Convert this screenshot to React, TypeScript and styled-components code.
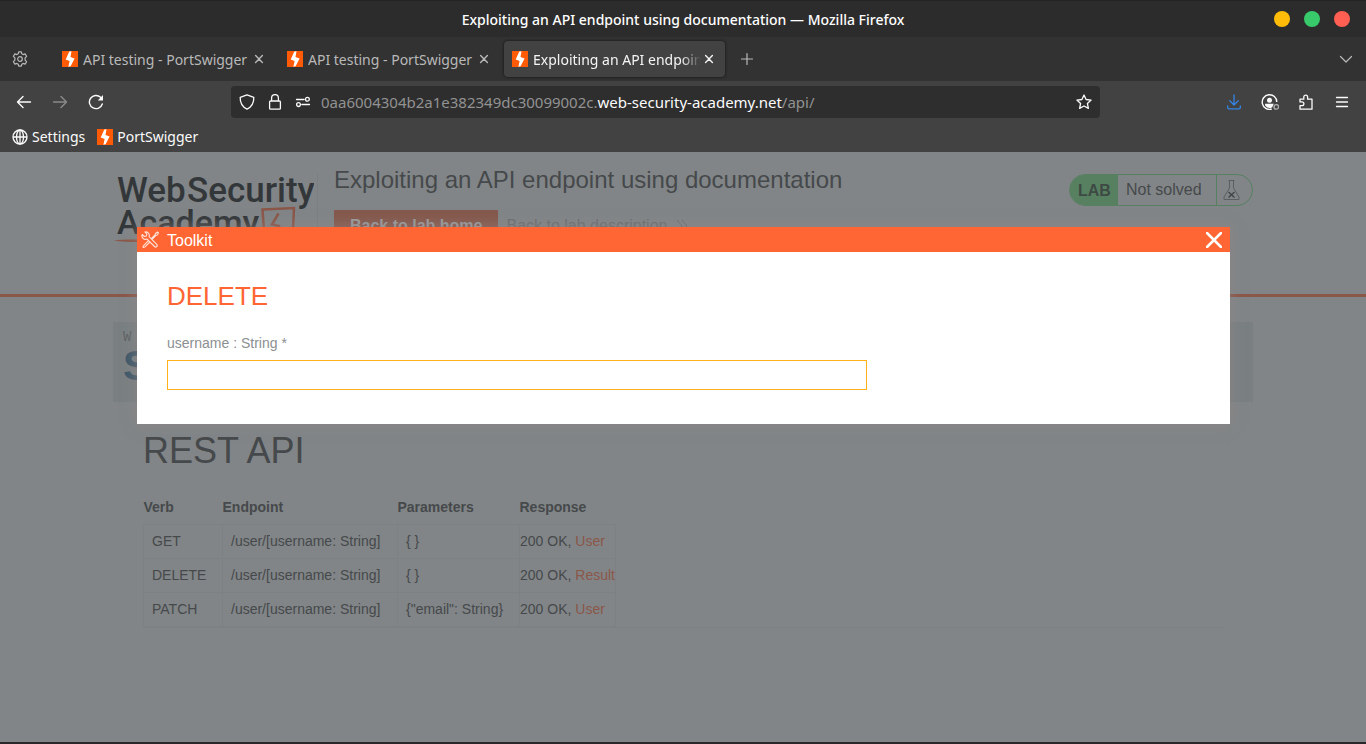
import React from "react";
import styled, { createGlobalStyle } from "styled-components";

const GlobalStyle = createGlobalStyle`
  * { box-sizing: border-box; }
  body { margin: 0; background: #2b282b; }
  button { font: inherit; color: inherit; background: none; border: 0; padding: 0; margin: 0; cursor: pointer; }
  a { color: inherit; text-decoration: none; }
  svg { display: block; flex: none; }
  h1, h2, h3 { margin: 0; font-weight: 400; }
`;

const uiFont = `"Noto Sans", "Open Sans", sans-serif`;
const pageFont = `"Liberation Sans", Arial, sans-serif`;

/* ---------- browser window ---------- */

const Window = styled.div`
  display: flex;
  flex-direction: column;
  min-height: 100vh;
  border-bottom: 2px solid #2b282b;
  font-family: ${uiFont};
`;

const TitleBar = styled.header`
  display: grid;
  grid-template-columns: 1fr auto 1fr;
  align-items: center;
  height: 37px;
  padding: 0 16px;
  background: #2c2c2c;
  border-top: 1px solid #242424;
  color: #fff;
  font-size: 14px;
  font-weight: 500;
`;

const WindowTitle = styled.span`
  grid-column: 2;
`;

const WindowButtons = styled.div`
  display: flex;
  justify-content: flex-end;
  gap: 14px;
`;

const WindowButton = styled.button<{ $color: string }>`
  width: 16px;
  height: 16px;
  border-radius: 50%;
  background: ${(p) => p.$color};
`;

const TabStrip = styled.nav`
  display: flex;
  align-items: center;
  height: 44px;
  padding: 0 12px;
  background: #323232;
  color: #b9b9b9;
`;

const TabList = styled.div`
  display: flex;
  gap: 4px;
  margin: 0 14px 0 26px;
`;

const Tab = styled.div<{ $active?: boolean }>`
  display: flex;
  align-items: center;
  width: 221px;
  height: 36px;
  padding: 0 8px;
  border-radius: 4px;
  font-size: 14px;
  color: ${(p) => (p.$active ? "#f4f4f4" : "#b9b9b9")};
  background: ${(p) => (p.$active ? "#424242" : "transparent")};
  box-shadow: ${(p) => (p.$active ? "0 0 3px rgba(0, 0, 0, 0.7)" : "none")};
`;

const TabLabel = styled.span<{ $faded?: boolean }>`
  width: 169px;
  margin-left: 5px;
  overflow: hidden;
  white-space: nowrap;
  mask-image: ${(p) => (p.$faded ? "linear-gradient(to left, transparent, #000 20px)" : "none")};
`;

const IconButton = styled.button<{ $color?: string }>`
  display: flex;
  align-items: center;
  justify-content: center;
  width: 16px;
  height: 16px;
  color: ${(p) => p.$color ?? "inherit"};
`;

const Spacer = styled.div`
  flex: 1;
`;

const NavBar = styled.div`
  display: grid;
  grid-template-columns: 231px minmax(0, 869px) 1fr;
  align-items: center;
  height: 42px;
  background: #424242;
  color: #fbfbfb;
`;

const NavGroup = styled.div<{ $end?: boolean }>`
  display: flex;
  align-items: center;
  gap: 20px;
  padding: 0 16px;
  justify-content: ${(p) => (p.$end ? "flex-end" : "flex-start")};
`;

const AddressBar = styled.div`
  display: flex;
  align-items: center;
  gap: 12px;
  height: 32px;
  padding: 0 8px;
  border-radius: 4px;
  background: #2e2e2e;
`;

const Address = styled.div`
  flex: 1;
  min-width: 0;
  margin-left: -2px;
  overflow: hidden;
  white-space: nowrap;
  font-size: 15px;
  color: #929292;

  strong {
    font-weight: 400;
    color: #fbfbfb;
  }
`;

const Bookmarks = styled.div`
  display: flex;
  align-items: center;
  gap: 12px;
  height: 29px;
  padding: 0 12px 2px;
  background: #424242;
  color: #fbfbfb;
  font-size: 14px;
`;

const Bookmark = styled.a`
  display: flex;
  align-items: center;
  gap: 4px;
`;

/* ---------- lab page ---------- */

const Page = styled.main`
  position: relative;
  flex: 1;
  background: #818587;
  color: #46494b;
  font-family: ${pageFont};
`;

const LabHeader = styled.div`
  height: 145px;
  border-bottom: 3px solid #8b5749;
`;

const Container = styled.div`
  width: 1140px;
  max-width: 100%;
  margin: 0 auto;
`;

const LabHeaderRow = styled(Container)`
  display: flex;
  align-items: flex-start;
  padding-top: 16px;
`;

const LogoLink = styled.a`
  margin-top: 6px;
  padding-right: 3px;
  border-right: 1px solid #7b7f81;
`;

const LabInfo = styled.div`
  flex: 1;
  margin-left: 16px;
`;

const LabTitle = styled.h2`
  font-size: 24px;
  line-height: 24px;
`;

const LabActions = styled.div`
  display: flex;
  align-items: center;
  gap: 8px;
  margin-top: 18px;
  color: #6b6f71;
  font-size: 16px;
`;

const HomeButton = styled.button`
  height: 32px;
  padding: 0 16px;
  background: #85594d;
  color: #9a9c9d;
  font-weight: 700;
`;

const BackLink = styled.a`
  display: flex;
  align-items: center;
  gap: 8px;
`;

const LabStatus = styled.div`
  display: flex;
  width: 184px;
  height: 32px;
  margin-top: 6px;
  overflow: hidden;
  border: 1px solid #578061;
  border-radius: 16px;
  font-size: 16px;
  line-height: 30px;
`;

const LabBadge = styled.span`
  width: 48px;
  padding-left: 8px;
  background: #578061;
  color: #3e4a44;
  font-weight: 700;
  line-height: 32px;
`;

const LabState = styled.span`
  flex: 1;
  padding-left: 8px;
`;

const LabFlask = styled.span`
  width: 36px;
  padding: 5px 0 0 6px;
  border-left: 1px solid #578061;
`;

const Banner = styled(Container)`
  height: 80px;
  margin-top: 25px;
  padding: 6px 10px;
  background: #7a8082;
`;

const BannerLead = styled.div`
  color: #5f6466;
  font-family: "Liberation Mono", monospace;
  font-size: 14px;
  line-height: 18px;
`;

const BannerName = styled.div`
  color: #40596a;
  font-size: 42px;
  font-weight: 700;
  line-height: 40px;
`;

const ApiDocs = styled.section`
  width: 1080px;
  max-width: 100%;
  margin: 0 auto;
  padding-top: 28px;
`;

const ApiTitle = styled.h1`
  font-size: 36px;
  line-height: 42px;
`;

const ApiBlock = styled.div`
  margin-top: 18px;
  border-bottom: 1px solid #7d8183;
`;

const ApiTable = styled.table`
  border-collapse: collapse;
  table-layout: fixed;
  width: 472px;
  font-size: 14px;
  line-height: 17px;

  th {
    height: 34px;
    padding: 2px 0 0;
    text-align: left;
  }

  td {
    height: 34px;
    padding: 0 8px;
    border: 1px solid #7d8183;
    white-space: nowrap;
  }

  td:last-child {
    padding: 0;
  }

  a {
    color: #8b5749;
  }
`;

const Column = styled.col<{ $width: number }>`
  width: ${(p) => p.$width}px;
`;

/* ---------- toolkit dialog ---------- */

const DialogLayer = styled.div`
  position: absolute;
  inset: 0;
  padding: 75px 136px 0 137px;
`;

const Dialog = styled.section`
  background: #fff;
  box-shadow: 0 0 12px 1px rgba(146, 134, 134, 0.6);
`;

const DialogBar = styled.div`
  display: flex;
  align-items: center;
  gap: 8px;
  height: 25px;
  padding: 0 8px 0 4px;
  background: #ff6633;
  color: #fff;
  font-size: 16px;
  line-height: 25px;
`;

const DialogName = styled.span`
  padding-top: 1px;
`;

const DialogForm = styled.form`
  display: flex;
  flex-direction: column;
  height: 172px;
  padding: 30px;
`;

const DialogTitle = styled.h3`
  color: #ff6633;
  font-size: 26px;
  line-height: 28px;
`;

const FieldLabel = styled.label`
  margin-top: 24px;
  color: #8c8f91;
  font-size: 14px;
  line-height: 18px;
`;

const Field = styled.input`
  width: 700px;
  max-width: 100%;
  height: 30px;
  margin-top: 8px;
  padding: 0 8px;
  border: 1px solid #ffb11b;
  background: #fff;
  outline: 0;
`;

/* ---------- icons ---------- */

const Line = ({ d, size = 16, width = 1.3 }: { d: string; size?: number; width?: number }) => (
  <svg width={size} height={size} viewBox="0 0 16 16" fill="none" stroke="currentColor" strokeWidth={width} strokeLinecap="round" strokeLinejoin="round">
    <path d={d} />
  </svg>
);

const Swigger = () => (
  <svg width="16" height="16" viewBox="0 0 16 16">
    <rect width="16" height="16" fill="#ff5a05" />
    <path d="M9.500 .2 7.300 .6 3.700 8.400 7.600 9.900 6.400 15.700 8.600 15.300 12.600 7.500 8.500 6.100z" fill="#fff" />
  </svg>
);

const Gear = () => (
  <svg width="16" height="16" viewBox="0 0 16 16" fill="none" stroke="currentColor" strokeWidth="1.2" strokeLinejoin="round">
    <path d="M6.7.8h2.6l.5 2 1.3.8 2-.7 1.5 2.4-1.5 1.5v2.4l1.5 1.5-1.5 2.4-2-.7-1.3.8-.5 2H6.7l-.5-2-1.3-.8-2 .7-1.5-2.4 1.5-1.5V6.8L1.4 5.3l1.5-2.4 2 .7 1.3-.8z" />
    <circle cx="8" cy="8" r="2.3" />
  </svg>
);

const Reload = () => (
  <svg width="16" height="16" viewBox="0 0 16 16" fill="none" stroke="currentColor" strokeWidth="1.4" strokeLinecap="round">
    <path d="M14.3 10A6.600 6.600 0 1 1 12.6 3.300L14 5" />
    <path d="M15 1v5.500H9.800z" fill="currentColor" stroke="none" />
  </svg>
);

const Lock = () => (
  <svg width="16" height="16" viewBox="0 0 16 16" fill="none" stroke="currentColor" strokeWidth="1.3">
    <rect x="2.6" y="7" width="10.8" height="8.2" rx="1" />
    <path d="M4.6 7V4a3.4 3.4 0 0 1 6.8 0v3" />
  </svg>
);

const Permissions = () => (
  <svg width="16" height="16" viewBox="0 0 16 16" fill="none" stroke="currentColor" strokeWidth="1.3" strokeLinecap="round">
    <path d="M1.5 5.5h7.6M6.8 10.5h7.7" />
    <circle cx="12.4" cy="5.3" r="1.9" />
    <circle cx="3.5" cy="10.6" r="1.9" />
  </svg>
);

const Account = () => (
  <svg width="18" height="16" viewBox="0 0 18 16">
    <path d="M15.8 8A7.3 7.3 0 1 0 10.700 15" fill="none" stroke="currentColor" strokeWidth="1.4" />
    <circle cx="8.500" cy="6.2" r="2.5" fill="currentColor" />
    <path d="M4.1 9.8h8.6l-1 2.4-.6 1.4A6 6 0 0 1 4.1 11.500z" fill="currentColor" />
    <circle cx="15.300" cy="12.900" r="2.300" fill="none" stroke="#b0b0b0" strokeWidth="1.3" />
  </svg>
);

const Globe = () => (
  <svg width="16" height="16" viewBox="0 0 16 16" fill="none" stroke="currentColor" strokeWidth="1.300">
    <circle cx="8" cy="8" r="7" />
    <ellipse cx="8" cy="8" rx="3.5" ry="7" />
    <path d="M1 8h14M8 1v14" />
  </svg>
);

const Tools = () => (
  <svg width="18" height="18" viewBox="0 0 18 18" fill="none" stroke="#ffe3d9" strokeWidth="1.100" strokeLinejoin="round" strokeLinecap="round">
    <path d="M1.200 3.500 3.400 5.500l2-.5.4-1.900L3.900 1a3.600 3.600 0 0 1 4.200 4.700l7.600 7.600a1.500 1.500 0 0 1-2.200 2.200L5.900 8a3.500 3.500 0 0 1-4.700-4.500z" />
    <path d="M10.500 7.300 14 4l.5-1.500L16.500 1l1 1-1.300 2-1.500.6-3.300 3.500M7 10.200l-4.600 4.600c-1 1.200 0 2.200 1.300 1.300L8.400 11.500" />
  </svg>
);

const Flask = () => (
  <svg width="18" height="20" viewBox="0 0 18 20" fill="none" stroke="#5b5f61" strokeWidth="1">
    <path d="M5.500.5h6M6.500.5v7.500L1 17v2.500h15V17L10.500 8V.500" />
    <path d="M5.500 12l6 5.500M11.500 12l-6 5.500" stroke="#3f4244" strokeWidth="1.300" />
  </svg>
);

const AcademyLogo = () => (
  <svg width="201" height="72" viewBox="0 0 201 72" aria-label="Web Security Academy">
    <g fill="#33373a" fontFamily="Roboto, sans-serif" fontWeight="500">
      <text x="4" y="28" fontSize="35">Web</text>
      <text x="74" y="28" fontSize="35">Security</text>
      <text x="4" y="60" fontSize="34">Academy</text>
    </g>
    <path d="M149.500 35.500 181 34l-1.500 31-28-1z" fill="none" stroke="#8b5749" strokeWidth="2.500" />
    <path d="M165.500 39.500 159 50.500l7 1.500v8" fill="none" stroke="#8b5749" strokeWidth="2.500" />
    <path d="M1 66.500c10-1.500 25-1 55-.5v2c-30 0-45 .5-55-1.500z" fill="#8b5749" />
  </svg>
);

/* ---------- content ---------- */

const tabs = [
  { title: "API testing - PortSwigger" },
  { title: "API testing - PortSwigger" },
  { title: "Exploiting an API endpoint using documentation", active: true },
];

const endpoints = [
  { verb: "GET", params: "{ }", result: "User" },
  { verb: "DELETE", params: "{ }", result: "Result" },
  { verb: "PATCH", params: '{"email": String}', result: "User" },
];

export default function App() {
  return (
    <>
      <GlobalStyle />
      <Window>
        <TitleBar>
          <WindowTitle>Exploiting an API endpoint using documentation — Mozilla Firefox</WindowTitle>
          <WindowButtons>
            <WindowButton $color="#ffbd09" aria-label="Minimize" />
            <WindowButton $color="#37c96a" aria-label="Maximize" />
            <WindowButton $color="#ff5f52" aria-label="Close window" />
          </WindowButtons>
        </TitleBar>

        <TabStrip>
          <IconButton aria-label="Settings"><Gear /></IconButton>
          <TabList>
            {tabs.map((tab, i) => (
              <Tab key={i} $active={tab.active}>
                <Swigger />
                <TabLabel $faded={tab.active}>{tab.title}</TabLabel>
                <IconButton aria-label="Close tab"><Line d="M4.600 4.600l6.800 6.800M11.400 4.600l-6.800 6.800" width={1.400} /></IconButton>
              </Tab>
            ))}
          </TabList>
          <IconButton aria-label="New tab"><Line d="M8 2.500v11M2.500 8h11" width={1.200} /></IconButton>
          <Spacer />
          <IconButton aria-label="List all tabs"><Line d="M2.500 5.500 8 11l5.500-5.500" width={1.200} /></IconButton>
        </TabStrip>

        <NavBar>
          <NavGroup>
            <IconButton aria-label="Back"><Line d="M14.500 8h-13M7 2.500 1.500 8 7 13.500" width={1.400} /></IconButton>
            <IconButton aria-label="Forward" $color="#8a8a8a"><Line d="M1.500 8h13M9 2.500 14.500 8 9 13.500" width={1.400} /></IconButton>
            <IconButton aria-label="Reload"><Reload /></IconButton>
          </NavGroup>
          <AddressBar>
            <IconButton aria-label="Tracking protection"><Line d="M8 .9 14.800 3.300c.2 5.200-2 9.500-6.800 11.900C3.200 12.800 1 8.500 1.200 3.300z" /></IconButton>
            <IconButton aria-label="Site information"><Lock /></IconButton>
            <IconButton aria-label="Permissions"><Permissions /></IconButton>
            <Address role="textbox" aria-label="Address">
              0aa6004304b2a1e382349dc30099002c.<strong>web-security-academy.net</strong>/api/
            </Address>
            <IconButton aria-label="Bookmark this page">
              <Line d="M8 1l2.100 4.500 5 .600-3.700 3.400 1 4.900L8 12l-4.400 2.400 1-4.900L.9 6.100l5-.600z" />
            </IconButton>
          </AddressBar>
          <NavGroup $end>
            <IconButton aria-label="Downloads" $color="#3584e4"><Line d="M8 .800v10M3.800 6.800 8 11l4.200-4.200M1.700 12v1.500c0 .8.500 1.300 1.300 1.300h10c.8 0 1.300-.5 1.300-1.300V12" /></IconButton>
            <IconButton aria-label="Account"><Account /></IconButton>
            <IconButton aria-label="Extensions"><Line d="M2 5.200h3.800V3a1.900 1.900 0 0 1 3.800 0v2.200H14v10H2v-3.500h2a1.900 1.900 0 0 0 0-3.800H2z" /></IconButton>
            <IconButton aria-label="Menu"><Line d="M2.500 3.500h11M2.500 8h11M2.500 12.500h11" /></IconButton>
          </NavGroup>
        </NavBar>

        <Bookmarks>
          <Bookmark href="#settings"><Globe />Settings</Bookmark>
          <Bookmark href="#portswigger"><Swigger />PortSwigger</Bookmark>
        </Bookmarks>

        <Page>
          <LabHeader>
            <LabHeaderRow>
              <LogoLink href="#academy"><AcademyLogo /></LogoLink>
              <LabInfo>
                <LabTitle>Exploiting an API endpoint using documentation</LabTitle>
                <LabActions>
                  <HomeButton>Back to lab home</HomeButton>
                  <BackLink href="#description">
                    Back to lab description
                    <svg width="14" height="14" viewBox="0 0 14 14" fill="none" stroke="currentColor">
                      <path d="M2 1l5 6-5 6M7 1l5 6-5 6" />
                    </svg>
                  </BackLink>
                </LabActions>
              </LabInfo>
              <LabStatus>
                <LabBadge>LAB</LabBadge>
                <LabState>Not solved</LabState>
                <LabFlask><Flask /></LabFlask>
              </LabStatus>
            </LabHeaderRow>
          </LabHeader>

          <Banner>
            <BannerLead>W</BannerLead>
            <BannerName>S</BannerName>
          </Banner>

          <ApiDocs>
            <ApiTitle>REST API</ApiTitle>
            <ApiBlock>
              <ApiTable>
                <colgroup>
                  <Column $width={79} />
                  <Column $width={175} />
                  <Column $width={122} />
                  <Column $width={96} />
                </colgroup>
                <thead>
                  <tr>
                    <th>Verb</th>
                    <th>Endpoint</th>
                    <th>Parameters</th>
                    <th>Response</th>
                  </tr>
                </thead>
                <tbody>
                  {endpoints.map((e) => (
                    <tr key={e.verb}>
                      <td>{e.verb}</td>
                      <td>/user/[username: String]</td>
                      <td>{e.params}</td>
                      <td>200 OK, <a href={`#${e.result}`}>{e.result}</a></td>
                    </tr>
                  ))}
                </tbody>
              </ApiTable>
            </ApiBlock>
          </ApiDocs>

          <DialogLayer>
            <Dialog role="dialog" aria-label="Toolkit">
              <DialogBar>
                <Tools />
                <DialogName>Toolkit</DialogName>
                <Spacer />
                <IconButton aria-label="Close toolkit"><Line d="M1 1l14 14M15 1 1 15" width={2.500} /></IconButton>
              </DialogBar>
              <DialogForm>
                <DialogTitle>DELETE</DialogTitle>
                <FieldLabel htmlFor="username">username : String *</FieldLabel>
                <Field id="username" type="text" />
              </DialogForm>
            </Dialog>
          </DialogLayer>
        </Page>
      </Window>
    </>
  );
}
